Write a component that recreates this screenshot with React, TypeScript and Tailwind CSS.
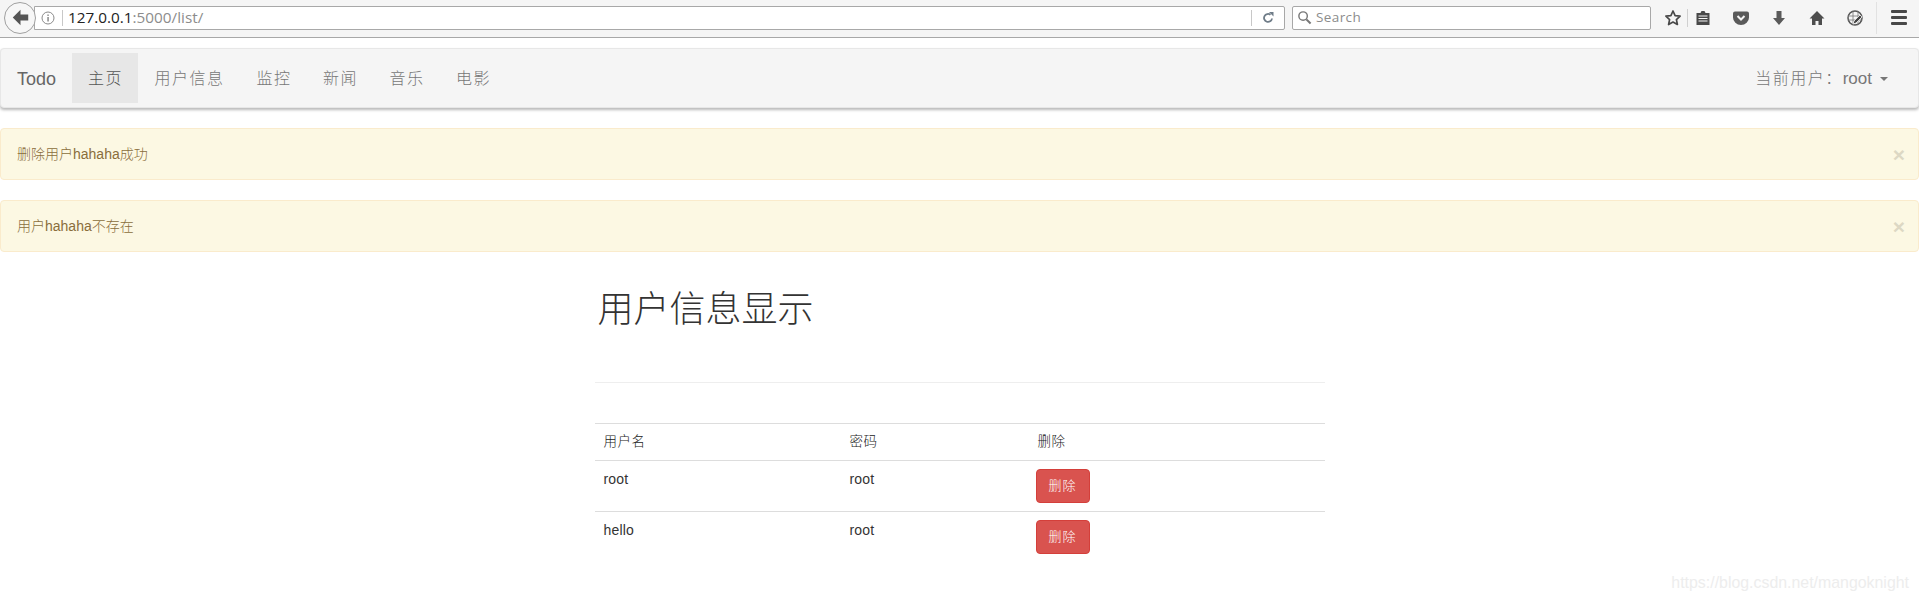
import type { ReactNode } from "react";

const CJK = "font-['Liberation_Sans','Noto_Sans_CJK_SC',sans-serif]";

const navItems = [
  { label: "主页", width: "w-[66px]", active: true },
  { label: "用户信息", width: "w-[102px]", active: false },
  { label: "监控", width: "w-[67px]", active: false },
  { label: "新闻", width: "w-[66px]", active: false },
  { label: "音乐", width: "w-[67px]", active: false },
  { label: "电影", width: "w-[66px]", active: false },
];

const users = [
  { name: "root", password: "root" },
  { name: "hello", password: "root" },
];

const alerts = ["删除用户hahaha成功", "用户hahaha不存在"];

function ToolIcon({ className, children }: { className: string; children: ReactNode }) {
  return (
    <svg viewBox="0 0 18 18" className={`h-[18px] w-[18px] shrink-0 ${className}`} aria-hidden="true">
      {children}
    </svg>
  );
}

function BrowserBar() {
  return (
    <div className="flex h-[38px] items-center border-b border-[#a8a8a8] bg-[#f5f5f5] pb-[2px] font-['Open_Sans',sans-serif]">
      <div className="z-10 ml-[4px] flex h-[32px] w-[32px] shrink-0 items-center justify-center rounded-full border border-[#a0a0a0] bg-[#f7f7f7]">
        <svg viewBox="0 0 16 16" className="h-[19px] w-[19px]" aria-hidden="true">
          <path d="M8 1.500 1.500 8 8 14.500V10.500h6.500v-5H8z" fill="#555" />
        </svg>
      </div>
      <div className="-ml-[2px] flex h-[24px] w-[1251px] shrink-0 items-center rounded-r-[2px] border border-[#a8a8a8] bg-white">
        <svg viewBox="0 0 14 14" className="ml-[6px] h-[14px] w-[14px] shrink-0" aria-hidden="true">
          <circle cx="7" cy="7" r="6" fill="none" stroke="#8a8a8a" />
          <rect x="6.400" y="6" width="1.300" height="4.500" fill="#777" />
          <rect x="6.400" y="3.500" width="1.300" height="1.400" fill="#777" />
        </svg>
        <span className="ml-[7px] h-[16px] w-px shrink-0 bg-[#c8c8c8]" />
        <span className="ml-[5px] text-[15.300px] leading-none text-[#222]">
          127.0.0.1<span className="text-[#8c8c8c]">:5000/list/</span>
        </span>
        <span className="ml-auto h-[16px] w-px shrink-0 bg-[#c8c8c8]" />
        <svg viewBox="0 0 14 14" className="mx-[9px] h-[14px] w-[14px] shrink-0" aria-hidden="true">
          <path d="M11 7.500A4 4 0 1 1 9.500 3.800" fill="none" stroke="#6f7c88" strokeWidth="1.800" />
          <path d="M8 1h4.500v4.500z" fill="#6f7c88" />
        </svg>
      </div>
      <div className="ml-[7px] flex h-[24px] w-[359px] shrink-0 items-center rounded-[2px] border border-[#a8a8a8] bg-white">
        <svg viewBox="0 0 16 16" className="ml-[4px] h-[15px] w-[15px] shrink-0" aria-hidden="true">
          <circle cx="6.500" cy="6.500" r="4.500" fill="none" stroke="#777" strokeWidth="1.500" />
          <path d="m10 10 4.500 4.500" stroke="#777" strokeWidth="2.200" />
        </svg>
        <span className="ml-[4px] text-[13.500px] leading-none tracking-[0.4px] text-[#8c8c8c]">Search</span>
      </div>
      <ToolIcon className="ml-[13px]">
        <path d="m9 2 2.100 4.600 5 .6-3.700 3.400 1 4.900L9 13l-4.400 2.500 1-4.900L1.900 7.200l5-.6z" fill="none" stroke="#484848" strokeWidth="1.700" strokeLinejoin="round" />
      </ToolIcon>
      <span className="ml-[5px] h-[18px] w-px shrink-0 bg-[#d0d0d0]" />
      <ToolIcon className="ml-[6px]">
        <path d="M2.500 4h4l1-2h3l1 2h4v12h-13z" fill="#484848" />
        <path d="M4.500 7h9M4.500 9.500h9M4.500 12h9" stroke="#f5f5f5" strokeWidth="1" />
      </ToolIcon>
      <ToolIcon className="ml-[20px]">
        <path d="M3 2.500h12a2 2 0 0 1 2 2v4a8 7.500 0 0 1-16 0v-4a2 2 0 0 1 2-2z" fill="#5a5a5a" />
        <path d="m5.500 7 3.500 3.500L12.500 7" fill="none" stroke="#f5f5f5" strokeWidth="2" />
      </ToolIcon>
      <ToolIcon className="ml-[20px]">
        <path d="M6.500 2h5v7H15l-6 7-6-7h3.500z" fill="#5a5a5a" />
      </ToolIcon>
      <ToolIcon className="ml-[20px]">
        <path d="M9 2 1.500 9.500H4V16h3.500v-4h3v4H14V9.500h2.500z" fill="#4e4e4e" />
      </ToolIcon>
      <ToolIcon className="ml-[20px]">
        <circle cx="9" cy="9" r="7" fill="none" stroke="#555" strokeWidth="1.500" />
        <path d="M2 7h14M2 11h14M7 2v14M12 2v14" stroke="#777" strokeWidth="0.800" />
        <path d="m7 15 1-3 6-6 2 2-6 6z" fill="#444" stroke="#f5f5f5" strokeWidth="0.800" />
      </ToolIcon>
      <span className="ml-[12px] h-[32px] w-px shrink-0 bg-[#e2e2e2]" />
      <div className="ml-[14px] flex w-[16px] shrink-0 flex-col gap-[3px]">
        <span className="h-[3px] rounded-[1px] bg-[#484848]" />
        <span className="h-[3px] rounded-[1px] bg-[#484848]" />
        <span className="h-[3px] rounded-[1px] bg-[#484848]" />
      </div>
    </div>
  );
}

function Navbar() {
  return (
    <nav className={`mt-[10px] flex h-[60px] items-center rounded-[4px] border border-[#e7e7e7] bg-[#f5f5f5] pr-[30px] shadow-[0_2px_3px_rgba(0,0,0,0.28)] ${CJK}`}>
      <span className="w-[71px] shrink-0 pl-[16px] pt-[2px] text-[18px] text-[#666]">Todo</span>
      <div className="flex h-[50px] items-center">
        {navItems.map((item) => (
          <span
            key={item.label}
            className={`flex h-full shrink-0 items-center justify-center pl-[1px] pt-[1px] text-[16px] font-light tracking-[1.500px] ${item.width} ${
              item.active ? "bg-[#e7e7e7] text-[#555]" : "text-[#777]"
            }`}
          >
            {item.label}
          </span>
        ))}
      </div>
      <div className="ml-auto flex items-center pt-[1px] text-[#777]">
        <span className="text-[16px] font-light tracking-[1.500px]">当前用户：</span>
        <span className="text-[17px]">root</span>
        <span className="ml-[8px] h-0 w-0 border-x-[4px] border-t-[4px] border-x-transparent border-t-[#777]" />
      </div>
    </nav>
  );
}

function AlertBox({ message }: { message: string }) {
  return (
    <div className={`flex h-[52px] items-center justify-between rounded-[4px] border border-[#faebcc] bg-[#fcf8e3] pl-[16px] pr-[13px] text-[14px] text-[#8a6d3b] ${CJK}`}>
      <span className="font-light">{message}</span>
      <span className="text-[21px] font-bold leading-none text-[#ddd8c4]">×</span>
    </div>
  );
}

function UserTable() {
  return (
    <table className={`w-full border-collapse text-[14px] tracking-[0.200px] text-[#333] ${CJK}`}>
      <thead>
        <tr className="h-[37px] border-y border-[#ddd] text-left">
          <th className="w-[246px] pl-[9px] text-[13.500px] font-light tracking-[0.500px] text-[#222]">用户名</th>
          <th className="w-[195px] pl-[9px] text-[13.500px] font-light tracking-[0.500px] text-[#222]">密码</th>
          <th className="pl-[2px] text-[13.500px] font-light tracking-[0.500px] text-[#222]">删除</th>
        </tr>
      </thead>
      <tbody>
        {users.map((user) => (
          <tr key={user.name} className="h-[51px] border-b border-[#ddd] last:border-b-0">
            <td className="pl-[9px] pt-[8px] align-top">{user.name}</td>
            <td className="pl-[9px] pt-[8px] align-top">{user.password}</td>
            <td className="pt-[8px] align-top">
              <button className="h-[34px] w-[54px] rounded-[4px] border border-[#d43f3a] bg-[#d9534f] text-[13px] font-light tracking-[1px] text-white">
                删除
              </button>
            </td>
          </tr>
        ))}
      </tbody>
    </table>
  );
}

export default function App() {
  return (
    <div className="relative h-[601px] w-[1919px] overflow-hidden bg-white">
      <BrowserBar />
      <Navbar />
      <div className="mt-[20px] flex flex-col gap-[20px]">
        {alerts.map((message) => (
          <AlertBox key={message} message={message} />
        ))}
      </div>
      <main className="mx-auto mt-[32px] w-[730px]">
        <h1 className={`pl-[3px] text-[36px] font-light leading-[52px] text-[#333] ${CJK}`}>用户信息显示</h1>
        <hr className="mt-[46px] border-[#eee]" />
        <div className="mt-[40px]">
          <UserTable />
        </div>
      </main>
      <span className="absolute bottom-[6px] right-[10px] font-['Liberation_Sans',sans-serif] text-[15.900px] text-[#ededed]">
        https://blog.csdn.net/mangoknight
      </span>
    </div>
  );
}
